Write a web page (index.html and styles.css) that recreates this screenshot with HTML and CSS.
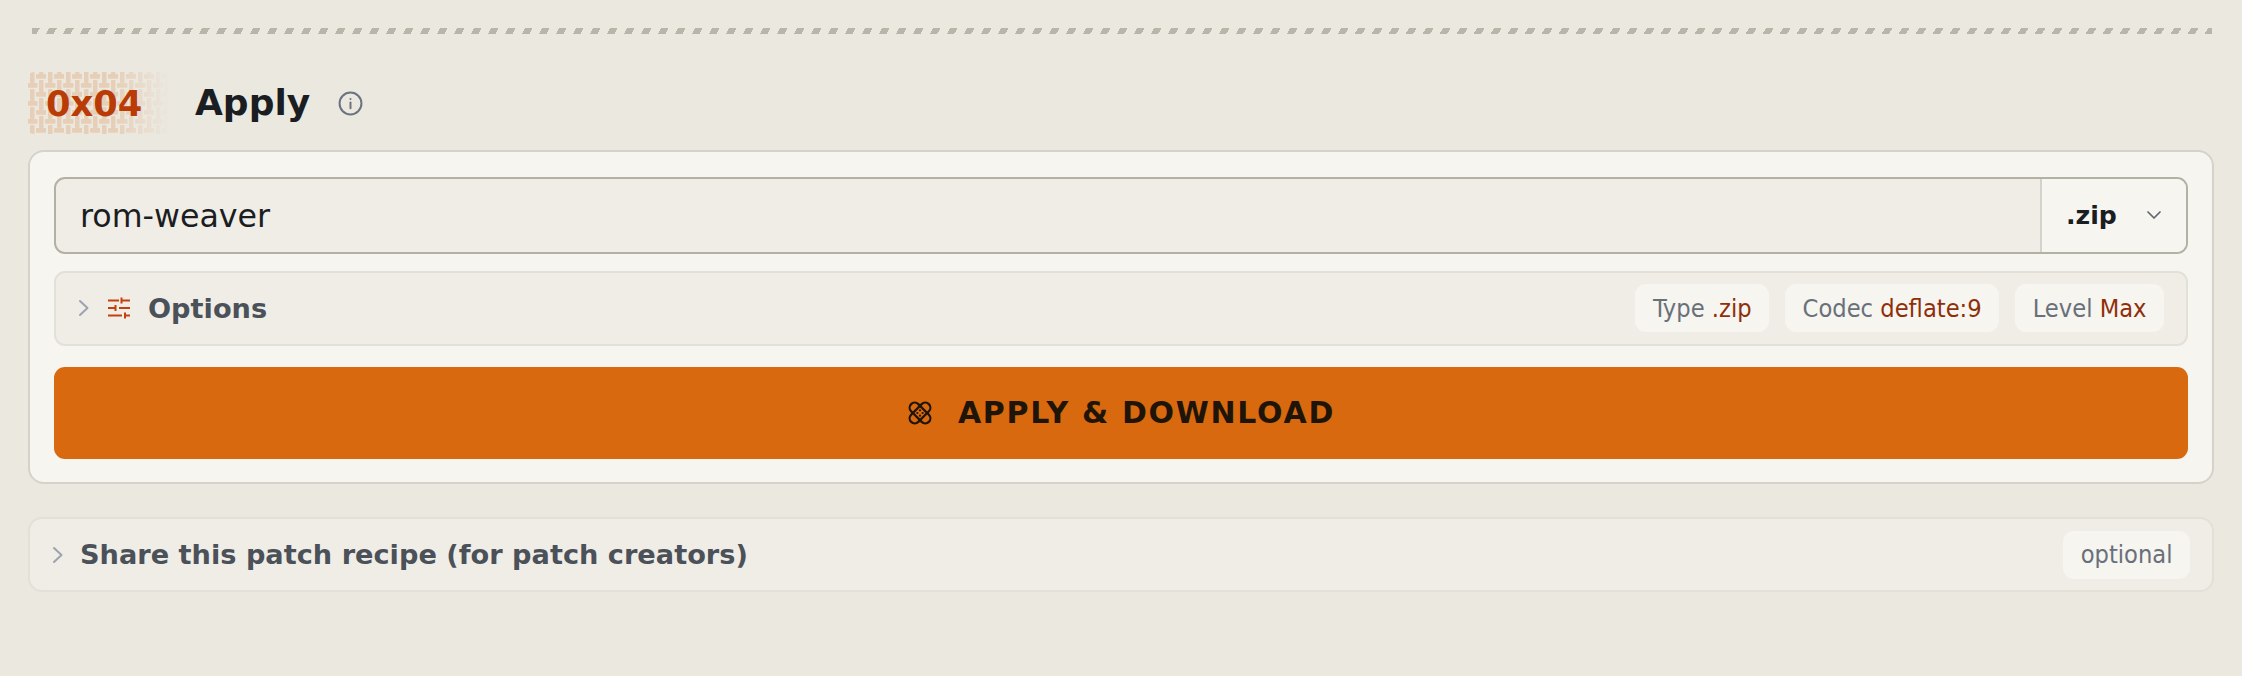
FILE: index.html
```
<!DOCTYPE html>
<html lang="en">
<head>
<meta charset="utf-8">
<title>Apply</title>
<link rel="stylesheet" href="styles.css">
</head>
<body>
<main class="page">
  <div class="divider"></div>
  <header class="step-head">
    <div class="badge">
      <svg class="weave" width="142" height="62" aria-hidden="true">
        <defs>
          <pattern id="weave" width="18" height="18" patternUnits="userSpaceOnUse">
            <g fill="#d8690f">
              <rect x="8" y="2" width="10.500" height="4.700" rx="1"/>
              <rect x="17" y="11" width="10.500" height="4.700" rx="1"/>
              <rect x="-1" y="11" width="10.500" height="4.700" rx="1"/>
              <rect x="2" y="-1" width="4.500" height="12" rx="1"/>
              <rect x="2" y="17" width="4.500" height="12" rx="1"/>
              <rect x="11" y="8" width="4.500" height="12" rx="1"/>
              <rect x="11" y="-10" width="4.500" height="12" rx="1"/>
            </g>
          </pattern>
          <linearGradient id="fade">
            <stop offset="0.6" stop-color="#fff"/>
            <stop offset="1" stop-color="#fff" stop-opacity="0"/>
          </linearGradient>
          <mask id="fade-mask"><rect width="142" height="62" fill="url(#fade)"/></mask>
        </defs>
        <rect width="142" height="62" rx="6" fill="url(#weave)" fill-opacity="0.2" mask="url(#fade-mask)"/>
      </svg>
      <span class="badge-text">0x04</span>
    </div>
    <h2 class="title">Apply</h2>
    <svg class="info" width="25" height="25" viewBox="0 0 24 24" fill="none" stroke="#6b7280" stroke-width="1.900" stroke-linecap="round"><circle cx="12" cy="12" r="10.500"/><path d="M12 11v5.500"/><path d="M12 7.600v.1"/></svg>
  </header>

  <section class="card">
    <div class="name-row">
      <div class="name-value">rom-weaver</div>
      <div class="ext-select">
        <span>.zip</span>
        <svg width="18" height="18" viewBox="0 0 18 18" fill="none" stroke="#5f6672" stroke-width="1.700" stroke-linecap="round" stroke-linejoin="round"><path d="M3 6l6 6 6-6"/></svg>
      </div>
    </div>

    <div class="panel options">
      <svg class="chev" width="12" height="20" viewBox="0 0 12 20" fill="none" stroke="#9ca3af" stroke-width="2" stroke-linecap="round" stroke-linejoin="round"><path d="M2 3l7.500 7L2 17"/></svg>
      <svg class="sliders" width="24" height="24" viewBox="0 0 24 24" fill="none" stroke="#c2410c" stroke-width="2"><path d="M1 4.500h11M14.500 4.500H23M14.500 1.500v6"/><path d="M1 12h7M8.500 9v6M12 12h11"/><path d="M1 19.500h14M18 19.500h5M18 16.500v6"/></svg>
      <span class="panel-label">Options</span>
      <div class="chips">
        <span class="chip">Type <b>.zip</b></span>
        <span class="chip">Codec <b>deflate:9</b></span>
        <span class="chip">Level <b>Max</b></span>
      </div>
    </div>

    <button class="apply" type="button">
      <svg width="26" height="26" viewBox="0 0 256 256" fill="none" stroke="#1f1408" stroke-width="22"><rect x="4.500" y="78" width="247" height="100" rx="50" transform="rotate(45 128 128)"/><rect x="4.500" y="78" width="247" height="100" rx="50" transform="rotate(-45 128 128)"/><g fill="#1f1408" stroke="none"><circle cx="128" cy="102" r="11"/><circle cx="102" cy="128" r="11"/><circle cx="154" cy="128" r="11"/><circle cx="128" cy="154" r="11"/></g></svg>
      <span>APPLY &amp; DOWNLOAD</span>
    </button>
  </section>

  <section class="panel share">
    <svg class="chev" width="12" height="20" viewBox="0 0 12 20" fill="none" stroke="#9ca3af" stroke-width="2" stroke-linecap="round" stroke-linejoin="round"><path d="M2 3l7.500 7L2 17"/></svg>
    <span class="panel-label">Share this patch recipe (for patch creators)</span>
    <span class="chip optional">optional</span>
  </section>
</main>
</body>
</html>
```
FILE: styles.css
```
* { box-sizing: border-box; }
html, body { margin: 0; height: 100%; }
body {
  background: #ebe8e0;
  font-family: "DejaVu Sans", sans-serif;
  color: #1a1d21;
}
.page { padding: 28px 28px 0 28px; }
.divider {
  height: 6px;
  margin: 0 2px 0 4px;
  background: repeating-linear-gradient(-60deg, #b8b6a8 0 6.500px, transparent 6.500px 14.720px);
}
.step-head {
  display: flex;
  align-items: center;
  height: 62px;
  margin-top: 38px;
}
.badge {
  position: relative;
  width: 142px;
  height: 62px;
  display: flex;
  align-items: center;
  padding-left: 18px;
}
.weave { position: absolute; left: 0; top: 0; }
.badge-text {
  position: relative;
  font-weight: 700;
  font-size: 35.280px;
  color: #b93c06;
}
.title {
  margin: 0 0 0 25px;
  font-size: 36px;
  font-weight: 700;
  line-height: 1;
  color: #1a1d21;
}
.info { margin-left: 28px; }
.card {
  margin-top: 16px;
  height: 333.500px;
  border: 2px solid #d5d3c9;
  border-radius: 16px;
  background: #f6f5f0;
  padding: 25px 24px 23px;
  display: flex;
  flex-direction: column;
}
.name-row {
  display: flex;
  height: 76.500px;
  border: 2px solid #b3b1a3;
  border-radius: 11px;
  overflow: hidden;
  background: #f0ede6;
}
.name-value {
  flex: 1;
  display: flex;
  align-items: center;
  padding: 2px 0 0 24px;
  font-size: 31.700px;
}
.ext-select {
  width: 146px;
  display: flex;
  align-items: center;
  gap: 28px;
  padding-left: 24px;
  border-left: 2px solid #d5d3c9;
  background: #f6f5f0;
  font-size: 25.200px;
  font-weight: 700;
}
.panel {
  display: flex;
  align-items: center;
  border: 2px solid #e3e0d8;
  border-radius: 11px;
  background: #f0ede6;
}
.options {
  margin-top: 17px;
  height: 75px;
  padding: 0 22px 0 22px;
}
.sliders { margin-left: 17px; }
.panel-label {
  font-size: 27.200px;
  font-weight: 700;
  color: #4b5159;
}
.options .panel-label { margin-left: 17px; }
.chips { margin-left: auto; display: flex; gap: 16px; }
.chip {
  height: 48px;
  display: flex;
  align-items: center;
  white-space: pre;
  padding: 0 17.500px;
  border-radius: 11px;
  background: #f6f5f0;
  font-size: 25.200px;
  font-stretch: condensed;
  color: #69707a;
}
.chip b { font-weight: 400; color: #8f2f0a; }
.apply {
  margin-top: 21px;
  height: 92px;
  border: 0;
  border-radius: 11px;
  background: #d8690f;
  display: flex;
  align-items: center;
  justify-content: center;
  gap: 25px;
  padding: 0;
  font-family: inherit;
  font-size: 30px;
  font-weight: 700;
  letter-spacing: 1.700px;
  color: #1f1408;
}
.share {
  margin-top: 33.500px;
  height: 75px;
  border-radius: 14px;
  padding: 0 22px 0 22px;
}
.share .panel-label { margin-left: 16px; }
.optional { margin-left: auto; }
```
